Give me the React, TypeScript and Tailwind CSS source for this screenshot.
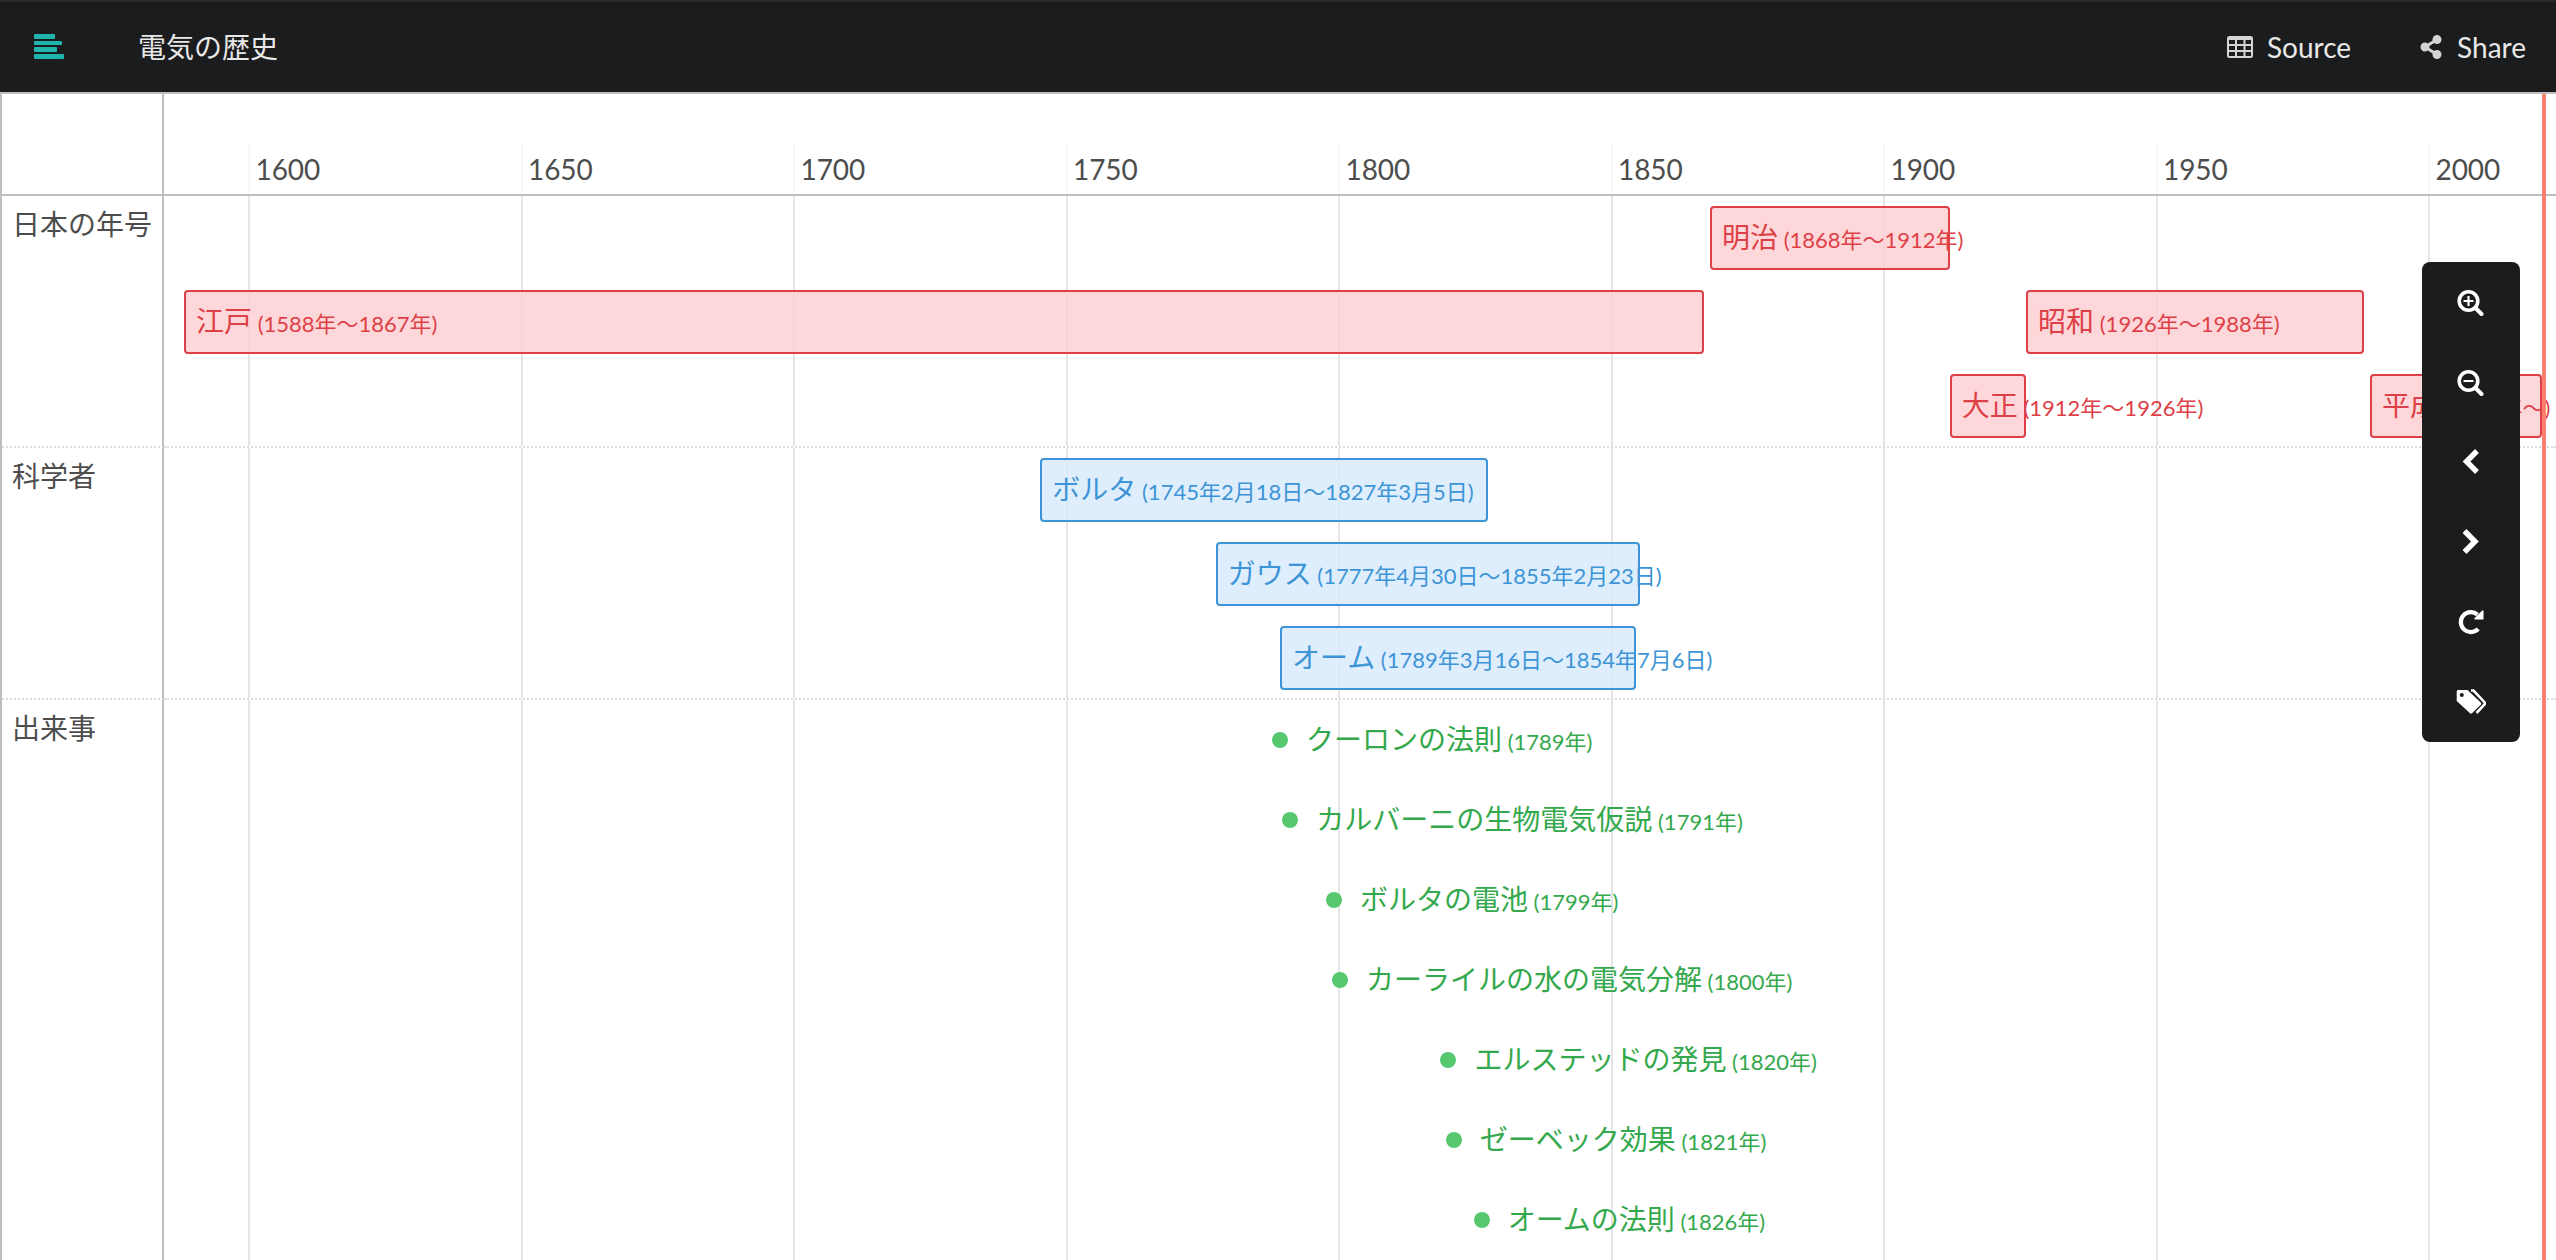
import React from 'react';
import { FaShareAlt } from 'react-icons/fa';

interface TimelineEntry {
    label: string;
    period: string;
    start: number;
    end?: number;
    row: number;
}

interface TimelineGroup {
    name: string;
    tone: 'red' | 'blue' | 'green';
    entries: TimelineEntry[];
}

// Visible range of the time axis, in decimal years
const RANGE_START = 1584.33;
const RANGE_END = 2023.23;
const NOW = 2021.03;

const TICKS = [1600, 1650, 1700, 1750, 1800, 1850, 1900, 1950, 2000];

const GROUPS: TimelineGroup[] = [
    {
        name: '日本の年号',
        tone: 'red',
        entries: [
            { label: '明治', period: '(1868年〜1912年)', start: 1868, end: 1912, row: 0 },
            { label: '江戸', period: '(1588年〜1867年)', start: 1588, end: 1866.9, row: 1 },
            { label: '昭和', period: '(1926年〜1988年)', start: 1926, end: 1988, row: 1 },
            { label: '大正', period: '(1912年〜1926年)', start: 1912, end: 1926, row: 2 },
            { label: '平成', period: '(1989年〜)', start: 1989.1, end: 2020.7, row: 2 },
        ],
    },
    {
        name: '科学者',
        tone: 'blue',
        entries: [
            { label: 'ボルタ', period: '(1745年2月18日〜1827年3月5日)', start: 1745.13, end: 1827.2, row: 0 },
            { label: 'ガウス', period: '(1777年4月30日〜1855年2月23日)', start: 1777.3, end: 1855.15, row: 1 },
            { label: 'オーム', period: '(1789年3月16日〜1854年7月6日)', start: 1789.1, end: 1854.5, row: 2 },
        ],
    },
    {
        name: '出来事',
        tone: 'green',
        entries: [
            { label: 'クーロンの法則', period: '(1789年)', start: 1789.1, row: 0 },
            { label: 'カルバーニの生物電気仮説', period: '(1791年)', start: 1791, row: 1 },
            { label: 'ボルタの電池', period: '(1799年)', start: 1799, row: 2 },
            { label: 'カーライルの水の電気分解', period: '(1800年)', start: 1800.1, row: 3 },
            { label: 'エルステッドの発見', period: '(1820年)', start: 1820, row: 4 },
            { label: 'ゼーベック効果', period: '(1821年)', start: 1821, row: 5 },
            { label: 'オームの法則', period: '(1826年)', start: 1826.1, row: 6 },
        ],
    },
];

const TONES = {
    red: 'border-[#dd4046] bg-[#fdd0d2]/85 text-[#dd4046]',
    blue: 'border-[#3d94d6] bg-[#d8ebfb]/85 text-[#3d94d6]',
    green: 'text-[#34a84c]',
};

const percent = (year: number) => `${((year - RANGE_START) / (RANGE_END - RANGE_START)) * 100}%`;

const LogoIcon = () => (
    <svg viewBox="0 0 30 26" className="w-[30px] h-[26px]" fill="#1fb5ad">
        <rect x="0" y="0" width="21" height="5" rx="1" />
        <rect x="0" y="7" width="28" height="4" rx="1" />
        <rect x="0" y="13" width="23" height="5" rx="1" />
        <rect x="0" y="20" width="30" height="5" rx="1" />
    </svg>
);

const TableIcon = () => (
    <svg viewBox="0 0 26 22" className="w-[26px] h-[22px]" fill="#d4d5d5">
        <path
            fillRule="evenodd"
            d="M2.500 0h21a2.500 2.500 0 0 1 2.500 2.500v17a2.500 2.500 0 0 1-2.500 2.500h-21A2.500 2.500 0 0 1 0 19.500v-17A2.500 2.500 0 0 1 2.500 0zM2 4v4h6V4zM10 4v4h6.500V4zM18.500 4v4H24V4zM2 10v4h6v-4zM10 10v4h6.500v-4zM18.500 10v4H24v-4zM2 16v4h6v-4zM10 16v4h6.500v-4zM18.500 16v4H24v-4z"
        />
    </svg>
);

const ZoomIcon = ({ plus }: { plus?: boolean }) => (
    <svg viewBox="0 -1.500 28 28" className="w-7 h-7" fill="none" stroke="currentColor">
        <circle cx="11.500" cy="11.500" r="9.300" strokeWidth="3.600" />
        <path d="M18.500 18.500L24.500 24.500" strokeWidth="4" strokeLinecap="round" />
        <path d={plus ? 'M6.500 11.500h10M11.500 6.500v10' : 'M6.500 11.500h10'} strokeWidth="2.200" />
    </svg>
);

const ChevronIcon = ({ right }: { right?: boolean }) => (
    <svg viewBox="0 0 28 28" className="w-7 h-7" fill="none" stroke="currentColor" strokeWidth="5.400">
        <path d={right ? 'M7.500 3L18 13.500L7.500 24' : 'M20 3L9.500 13.500L20 24'} />
    </svg>
);

const RepeatIcon = () => (
    <svg viewBox="0 0 28 28" className="w-7 h-7">
        <path d="M21.200 20.800A10 10 0 1 1 20.500 6.600" fill="none" stroke="currentColor" strokeWidth="4.200" />
        <path d="M26.500 2.800V11.500H17.800L17.200 10.500L25.500 2.300Z" fill="currentColor" />
    </svg>
);

const TagsIcon = () => (
    <svg viewBox="0 0 30 26" className="w-[30px] h-[26px]">
        <path
            fill="currentColor"
            fillRule="evenodd"
            d="M2 1H11.500L25 13.700Q25.700 14.600 25 15.500L16 24.300Q15 25 14 24.300L.700 12V2.500Q.700 1 2 1ZM5.800 4a2 2 0 1 0 0 4a2 2 0 0 0 0-4Z"
        />
        <path d="M15 1.500H17.500L28.500 13.200Q29.300 14.500 28.500 15.500L20.500 24" fill="none" stroke="currentColor" strokeWidth="2.600" />
    </svg>
);

const TOOLS = [
    { title: 'Zoom in', icon: <ZoomIcon plus /> },
    { title: 'Zoom out', icon: <ZoomIcon /> },
    { title: 'Move left', icon: <ChevronIcon /> },
    { title: 'Move right', icon: <ChevronIcon right /> },
    { title: 'Reset', icon: <RepeatIcon /> },
    { title: 'Tags', icon: <TagsIcon /> },
];

const Header = () => (
    <header className="flex items-center h-[92px] border-t-2 border-[#27292a] bg-[#1b1c1d] text-[#e8e8e8]">
        <a href="#" aria-label="Home" className="pl-[34px] pr-[38px]">
            <LogoIcon />
        </a>
        <h1 className="pl-9">電気の歴史</h1>
        <nav className="ml-auto flex items-center">
            <a href="#source" className="flex items-center gap-3.5 px-8">
                <TableIcon />
                Source
            </a>
            <a href="#share" className="flex items-center gap-3.5 pl-9 pr-[30px]">
                <FaShareAlt className="w-6 h-6 text-[#d4d5d5]" />
                Share
            </a>
        </nav>
    </header>
);

const EntryText = ({ entry }: { entry: TimelineEntry }) => (
    <span>
        {entry.label}
        <span className="text-[22px]"> {entry.period}</span>
    </span>
);

const RangeItem = ({ entry, tone }: { entry: TimelineEntry; tone: TimelineGroup['tone'] }) => (
    <div
        className={`absolute h-16 pl-2.5 border-2 rounded whitespace-nowrap leading-[58px] ${TONES[tone]}`}
        style={{
            left: percent(entry.start),
            width: `calc(${percent(entry.end!)} - ${percent(entry.start)})`,
            top: 10 + entry.row * 84,
        }}
    >
        <EntryText entry={entry} />
    </div>
);

const PointItem = ({ entry, tone }: { entry: TimelineEntry; tone: TimelineGroup['tone'] }) => (
    <div
        className={`absolute -ml-2 flex items-center gap-[18px] h-10 whitespace-nowrap ${TONES[tone]}`}
        style={{ left: percent(entry.start), top: 20 + entry.row * 80 }}
    >
        <span className="w-4 h-4 rounded-full bg-[#57c870]" />
        <EntryText entry={entry} />
    </div>
);

const GridLines = () => (
    <>
        {TICKS.map((year) => (
            <div key={year} className="absolute inset-y-0 -ml-px border-l-2 border-[#e5e5e5]" style={{ left: percent(year) }} />
        ))}
    </>
);

const App: React.FC = () => {
    return (
        <div className="relative flex flex-col h-screen overflow-hidden bg-white text-[28px] leading-10 text-[#4d4d4d] font-['Lato','Noto_Sans_CJK_JP',sans-serif]" lang="ja">
            <Header />

            <main className="relative flex-1 min-h-0 flex flex-col border-t-2 border-l-2 border-[#bfbfbf]">
                {/* Time axis */}
                <div className="flex h-[102px] shrink-0 border-b-2 border-[#bfbfbf]">
                    <div className="w-[162px] shrink-0 border-r-2 border-[#bfbfbf]" />
                    <div className="relative flex-1">
                        {TICKS.map((year) => (
                            <div
                                key={year}
                                className="absolute bottom-0 -ml-px h-[50px] pl-[5px] pt-[5px] border-l-2 border-[#f8f8f8]"
                                style={{ left: percent(year) }}
                            >
                                {year}
                            </div>
                        ))}
                    </div>
                </div>

                {/* Groups */}
                {GROUPS.map((group) => (
                    <section key={group.name} className="group flex shrink-0 h-[252px] last-of-type:h-auto last-of-type:flex-1">
                        <h2 className="w-[162px] shrink-0 pl-2.5 pt-2 border-r-2 border-r-[#bfbfbf] border-b-2 border-b-[#dcdcdc] [border-bottom-style:dotted] group-last-of-type:border-b-0 whitespace-nowrap">
                            {group.name}
                        </h2>
                        <div className="relative flex-1 border-b-2 border-dotted border-[#dcdcdc] group-last-of-type:border-b-0">
                            <GridLines />
                            {group.entries.map((entry) =>
                                entry.end ? (
                                    <RangeItem key={entry.label} entry={entry} tone={group.tone} />
                                ) : (
                                    <PointItem key={entry.label} entry={entry} tone={group.tone} />
                                )
                            )}
                        </div>
                    </section>
                ))}

                {/* Current time */}
                <div className="absolute inset-y-0 left-[162px] right-0 pointer-events-none">
                    <div className="absolute inset-y-0 -ml-0.5 w-1 bg-[#ff7f6e]" style={{ left: percent(NOW) }} />
                </div>
            </main>

            <div className="absolute top-[262px] right-9 flex flex-col w-[98px] rounded-lg overflow-hidden bg-[#1b1c1d] text-white">
                {TOOLS.map((tool) => (
                    <button key={tool.title} title={tool.title} aria-label={tool.title} className="flex items-center justify-center h-20">
                        {tool.icon}
                    </button>
                ))}
            </div>
        </div>
    );
};

export default App;
